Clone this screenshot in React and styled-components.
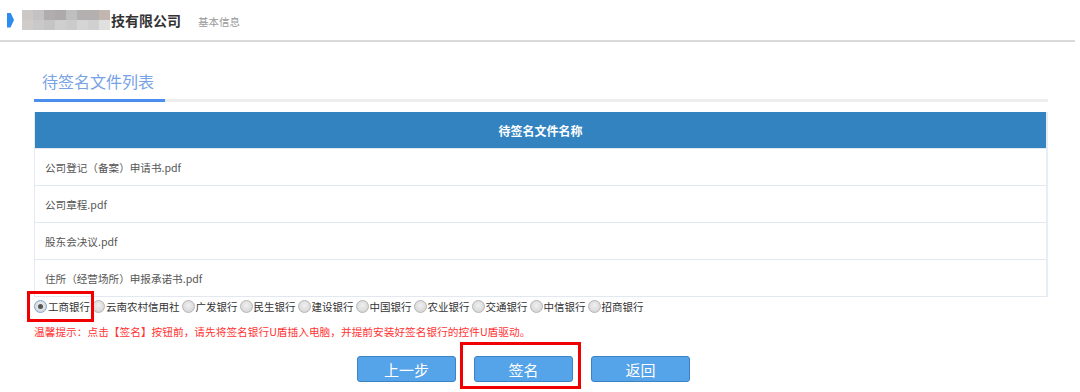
import React from 'react';
import styled, { createGlobalStyle } from 'styled-components';

const GlobalStyle = createGlobalStyle`
  body {
    margin: 0;
    background: #fff;
    font-family: "Microsoft YaHei", "Noto Sans CJK SC", "Liberation Sans", sans-serif;
  }
`;

const Page = styled.div`
  width: 1080px;
  height: 392px;
  position: relative;
  overflow: hidden;
`;

const Header = styled.div`
  display: flex;
  align-items: center;
  height: 42px;
  width: 1075px;
  border-bottom: 2px solid #d9d9d9;
  padding-left: 7px;
  box-sizing: border-box;
`;

const Marker = styled.span`
  flex-shrink: 0;
  width: 7px;
  height: 15px;
  background: #2d8cf0;
  clip-path: polygon(0 0, 50% 0, 100% 50%, 50% 100%, 0 100%);
  margin-right: 8px;
`;

const Mosaic = styled.div`
  display: grid;
  grid-template-columns: repeat(8, 11px);
  grid-template-rows: 10px 10px;
`;

const Cell = styled.span`
  background: ${(p) => p.$c};
`;

const Company = styled.span`
  font-size: 14px;
  font-weight: bold;
  color: #333;
  margin-left: 1px;
`;

const Sub = styled.span`
  font-size: 10.5px;
  color: #999;
  margin-left: 17px;
  padding-top: 2px;
`;

const Content = styled.div`
  padding: 27px 0 0 34px;
  width: 1014px;
`;

const TabBar = styled.div`
  border-bottom: 3px solid #eeeeee;
  display: flex;
`;

const Tab = styled.div`
  width: 131px;
  box-sizing: border-box;
  padding: 0 0 6px 8px;
  font-size: 16px;
  color: #77a2e4;
  border-bottom: 3px solid #4a8ff0;
  margin-bottom: -3px;
  line-height: 24px;
`;

const Table = styled.div`
  margin-top: 10px;
  border-right: 2px solid #e6edf4;
  border-left: 1px solid #e3eaf1;
`;

const HeadRow = styled.div`
  height: 36px;
  background: #3283c0;
  color: #fff;
  font-size: 12px;
  font-weight: bold;
  display: flex;
  align-items: center;
  justify-content: center;
`;

const Row = styled.div`
  height: 36px;
  border-top: 1px solid #e1e8ef;
  display: flex;
  align-items: center;
  padding-left: 10px;
  font-size: 10.6px;
  color: #555;
  &:last-child {
    border-bottom: 1px solid #e1e8ef;
  }
`;

const Banks = styled.div`
  display: flex;
  align-items: center;
  height: 16px;
  margin-top: 1px;
`;

const Bank = styled.label`
  display: flex;
  align-items: center;
  font-size: 10.5px;
  color: #333;
  margin-right: 2px;
`;

const Radio = styled.span`
  flex-shrink: 0;
  width: 11px;
  height: 11px;
  border-radius: 50%;
  border: 1px solid ${(p) => (p.$on ? '#7aa7d8' : '#b5b5b5')};
  background: radial-gradient(circle at 50% 40%, #f0f0f0, #cfcfcf);
  display: flex;
  align-items: center;
  justify-content: center;
  margin-right: 1px;
  &::after {
    content: '';
    width: 5px;
    height: 5px;
    border-radius: 50%;
    background: ${(p) => (p.$on ? '#555' : 'transparent')};
  }
`;

const Warn = styled.div`
  margin-top: 10px;
  font-size: 10.7px;
  color: #ff3333;
`;

const Buttons = styled.div`
  display: flex;
  gap: 18px;
  margin: 17px 0 0 323px;
`;

const Button = styled.button`
  width: 99px;
  height: 26px;
  background: #55a3e8;
  border: 1px solid #3a84c6;
  border-radius: 3px;
  color: #fff;
  font-size: 15px;
  font-family: inherit;
  padding: 0;
`;

const Mark = styled.div`
  position: absolute;
  border: 3px solid #f00000;
  box-sizing: border-box;
  pointer-events: none;
`;

const mosaic = [
  '#ccc8c6', '#c3c3c3', '#b1acae', '#aeaaab', '#bfbfbf', '#b3b0b1', '#b5b0b0', '#c2b6b0',
  '#d0ccca', '#c9c9c9', '#c4c4c4', '#cfcfcf', '#cbcbcb', '#d5d5d5', '#d0d0d0', '#e0e0e0',
];

const files = [
  '公司登记（备案）申请书.pdf',
  '公司章程.pdf',
  '股东会决议.pdf',
  '住所（经营场所）申报承诺书.pdf',
];

const banks = ['工商银行', '云南农村信用社', '广发银行', '民生银行', '建设银行', '中国银行', '农业银行', '交通银行', '中信银行', '招商银行'];

const App = () => {
  return (
    <Page>
      <GlobalStyle />
      <Header>
        <Marker />
        <Mosaic>
          {mosaic.map((c, i) => (
            <Cell key={i} $c={c} />
          ))}
        </Mosaic>
        <Company>技有限公司</Company>
        <Sub>基本信息</Sub>
      </Header>
      <Content>
        <TabBar>
          <Tab>待签名文件列表</Tab>
        </TabBar>
        <Table>
          <HeadRow>待签名文件名称</HeadRow>
          {files.map((f) => (
            <Row key={f}>{f}</Row>
          ))}
        </Table>
        <Banks>
          {banks.map((b, i) => (
            <Bank key={b}>
              <Radio $on={i === 0} />
              {b}
            </Bank>
          ))}
        </Banks>
        <Warn>温馨提示：点击【签名】按钮前，请先将签名银行U盾插入电脑，并提前安装好签名银行的控件U盾驱动。</Warn>
        <Buttons>
          <Button>上一步</Button>
          <Button>签名</Button>
          <Button>返回</Button>
        </Buttons>
      </Content>
      <Mark style={{ left: 27, top: 291, width: 67, height: 31 }} />
      <Mark style={{ left: 460, top: 342, width: 121, height: 47 }} />
    </Page>
  );
};

export default App;
